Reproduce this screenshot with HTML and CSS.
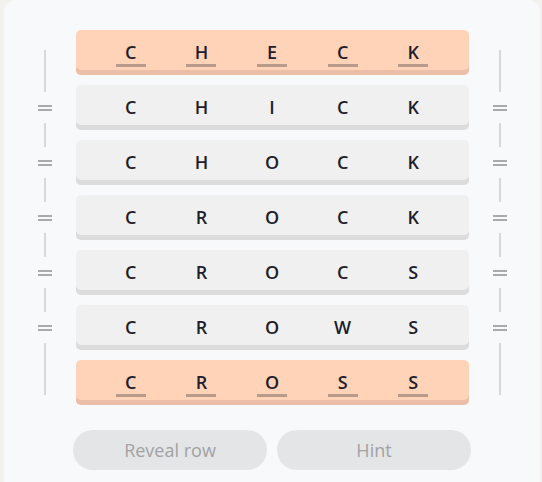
FILE: index.html
```html
<!DOCTYPE html>
<html lang="en">
<head>
<meta charset="utf-8">
<title>Word ladder</title>
<link rel="stylesheet" href="styles.css">
</head>
<body>
<div class="card">
  <div class="board">
    <div class="side">
      <div class="seg seg-first"></div>
      <div class="eq"><span class="eq-mark"></span></div>
      <div class="seg"></div>
      <div class="eq"><span class="eq-mark"></span></div>
      <div class="seg"></div>
      <div class="eq"><span class="eq-mark"></span></div>
      <div class="seg"></div>
      <div class="eq"><span class="eq-mark"></span></div>
      <div class="seg"></div>
      <div class="eq"><span class="eq-mark"></span></div>
      <div class="seg seg-last"></div>
    </div>
    <div class="rows">
      <div class="row fixed"><span class="cell">C</span><span class="cell">H</span><span class="cell">E</span><span class="cell">C</span><span class="cell">K</span></div>
      <div class="row"><span class="cell">C</span><span class="cell">H</span><span class="cell">I</span><span class="cell">C</span><span class="cell">K</span></div>
      <div class="row"><span class="cell">C</span><span class="cell">H</span><span class="cell">O</span><span class="cell">C</span><span class="cell">K</span></div>
      <div class="row"><span class="cell">C</span><span class="cell">R</span><span class="cell">O</span><span class="cell">C</span><span class="cell">K</span></div>
      <div class="row"><span class="cell">C</span><span class="cell">R</span><span class="cell">O</span><span class="cell">C</span><span class="cell">S</span></div>
      <div class="row"><span class="cell">C</span><span class="cell">R</span><span class="cell">O</span><span class="cell">W</span><span class="cell">S</span></div>
      <div class="row fixed"><span class="cell">C</span><span class="cell">R</span><span class="cell">O</span><span class="cell">S</span><span class="cell">S</span></div>
    </div>
    <div class="side">
      <div class="seg seg-first"></div>
      <div class="eq"><span class="eq-mark"></span></div>
      <div class="seg"></div>
      <div class="eq"><span class="eq-mark"></span></div>
      <div class="seg"></div>
      <div class="eq"><span class="eq-mark"></span></div>
      <div class="seg"></div>
      <div class="eq"><span class="eq-mark"></span></div>
      <div class="seg"></div>
      <div class="eq"><span class="eq-mark"></span></div>
      <div class="seg seg-last"></div>
    </div>
  </div>
  <div class="actions">
    <button class="btn" type="button">Reveal row</button>
    <button class="btn" type="button">Hint</button>
  </div>
</div>
</body>
</html>
```

FILE: styles.css
```css
* { box-sizing: border-box; }

html, body {
  margin: 0;
  padding: 0;
  background: #f2f1ee;
  font-family: "Open Sans", "Noto Sans", sans-serif;
}

body {
  height: 482px;
  overflow: hidden;
}

.card {
  margin: 0 2px 0 4px;
  width: 536px;
  height: 500px;
  background: #f8f9fb;
  border-radius: 12px 12px 0 0;
  padding-top: 30px;
}

.board {
  display: flex;
  justify-content: center;
  gap: 24px;
}

.side {
  width: 14px;
  display: flex;
  flex-direction: column;
  align-items: center;
  padding-top: 20px;
}

.seg {
  width: 2px;
  height: 24px;
  background: #d8d8d8;
}

.seg-first { height: 42px; }
.seg-last { height: 52px; }

.eq {
  height: 31px;
  width: 14px;
  display: flex;
  align-items: center;
  justify-content: center;
}

.eq-mark {
  display: block;
  width: 14px;
  height: 6px;
  border-top: 2px solid #aaaaaa;
  border-bottom: 2px solid #aaaaaa;
}

.rows {
  width: 393px;
  display: flex;
  flex-direction: column;
  gap: 10px;
}

.row {
  height: 45px;
  border-radius: 5px;
  background: #f0f0f0;
  box-shadow: inset 0 -5px 0 #dcdcdc;
  display: grid;
  grid-template-columns: repeat(5, 1fr);
  padding: 0 20px;
  align-items: center;
  justify-items: center;
}

.row.fixed {
  background: #ffd3b8;
  box-shadow: inset 0 -5px 0 #ebbea7;
}

.cell {
  display: block;
  width: 30px;
  text-align: center;
  font-size: 18px;
  font-weight: 600;
  line-height: 24px;
  padding-top: 2px;
  color: #1d1d2b;
  border-bottom: 3px solid transparent;
}

.row.fixed .cell {
  border-bottom-color: #b99b8b;
}

.actions {
  margin-top: 25px;
  display: flex;
  justify-content: center;
  gap: 10px;
}

.btn {
  width: 194px;
  height: 40px;
  border: none;
  border-radius: 20px;
  background: #e4e5e7;
  color: #a2a2a4;
  font-family: "Open Sans", "Noto Sans", sans-serif;
  font-size: 18px;
  font-weight: 500;
  padding: 0 0 1px;
}
```
